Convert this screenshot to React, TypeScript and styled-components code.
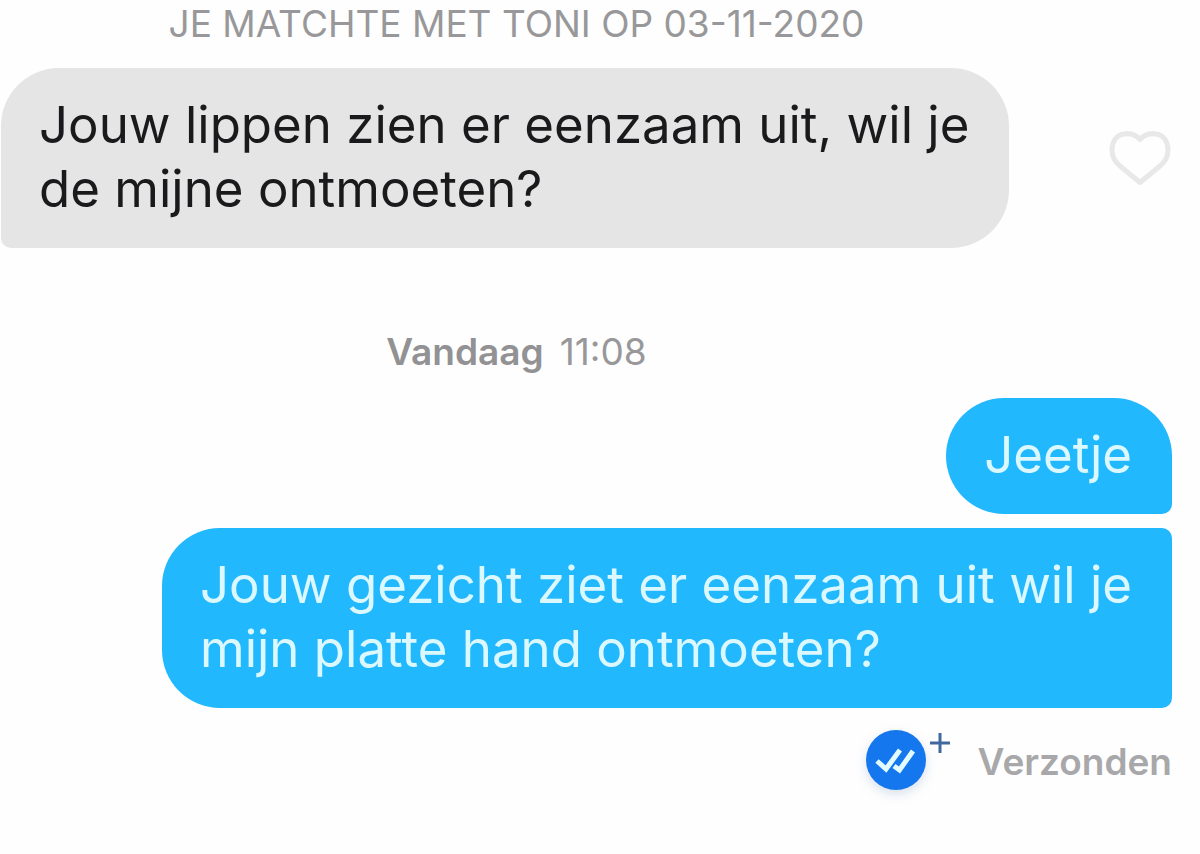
import React from 'react';
import styled, { createGlobalStyle } from 'styled-components';

const Global = createGlobalStyle`
  * { box-sizing: border-box; }
  body { margin: 0; background: #fefefe; font-family: Inter, "Liberation Sans", sans-serif; }
`;
const Chat = styled.main`
  display: flex;
  flex-direction: column;
  padding: 4px 28px 24px 1px;
`;
const Notice = styled.p<{ $top: number; $bottom: number }>`
  display: flex;
  justify-content: center;
  gap: 16px;
  margin: ${p => p.$top}px 140px ${p => p.$bottom}px 0;
  font-size: 37px;
  line-height: 40px;
  color: #98989a;
`;
const Day = styled.span`
  font-weight: 600;
  color: #929294;
`;
const Row = styled.div`
  display: flex;
  align-items: center;
  justify-content: space-between;
`;
const Replies = styled.div`
  display: flex;
  flex-direction: column;
  align-items: flex-end;
  gap: 14px;
`;
const Bubble = styled.p<{ $mine?: boolean; $follows?: boolean }>`
  margin: 0;
  padding: 25px 40px 27px 38px;
  font-size: 51px;
  line-height: 64px;
  white-space: pre-line;
  color: ${p => (p.$mine ? '#dcf8ff' : '#1a1a1c')};
  background: ${p => (p.$mine ? '#21b8fe' : '#e5e5e5')};
  border-radius: ${p =>
    p.$mine ? `58px ${p.$follows ? 10 : 58}px 10px 58px` : '58px 58px 58px 10px'};
`;
const Like = styled.button`
  display: flex;
  padding: 0;
  border: 0;
  background: none;
  cursor: pointer;
`;
const Status = styled.footer`
  display: flex;
  justify-content: flex-end;
  align-items: center;
  gap: 28px;
  margin-top: 22px;
  font-size: 37px;
  font-weight: 600;
  line-height: 40px;
  color: #a8a8aa;
`;
const Receipt = styled.svg`
  overflow: visible;
  circle { filter: drop-shadow(0 4px 6px rgba(20, 70, 140, 0.16)); }
`;

export default function App() {
  return (
    <>
      <Global />
      <Chat>
        <Notice $top={0} $bottom={24}>JE MATCHTE MET TONI OP 03-11-2020</Notice>
        <Row>
          <Bubble>{'Jouw lippen zien er eenzaam uit, wil je\nde mijne ontmoeten?'}</Bubble>
          <Like aria-label="Vind ik leuk">
            <svg width="64" height="60" viewBox="0 0 64 60" fill="none" stroke="#e8e8e9" strokeWidth="5" strokeLinejoin="round">
              <path d="M32 11.5C27 6 21 5 16 6 8 7 4 14 4 22c0 7 3 12 8 16L32 54.5 52 38c5-4 8-9 8-16 0-8-4-15-12-16-5-1-11 0-16 5.5Z" />
            </svg>
          </Like>
        </Row>
        <Notice $top={84} $bottom={26}>
          <Day>Vandaag</Day>
          <time dateTime="11:08">11:08</time>
        </Notice>
        <Replies>
          <Bubble $mine>Jeetje</Bubble>
          <Bubble $mine $follows>{'Jouw gezicht ziet er eenzaam uit wil je\nmijn platte hand ontmoeten?'}</Bubble>
        </Replies>
        <Status>
          <Receipt width="84" height="64" viewBox="0 0 84 64" fill="none" aria-hidden="true">
            <circle cx="30" cy="30" r="30" fill="#1477ee" />
            <path d="M11 31 20 39 34 20M28 36 33.5 40 47 21" stroke="#e2fbff" strokeWidth="5" />
            <path d="M64 13H84M74 3V23" stroke="#41699f" strokeWidth="3" />
          </Receipt>
          Verzonden
        </Status>
      </Chat>
    </>
  );
}
